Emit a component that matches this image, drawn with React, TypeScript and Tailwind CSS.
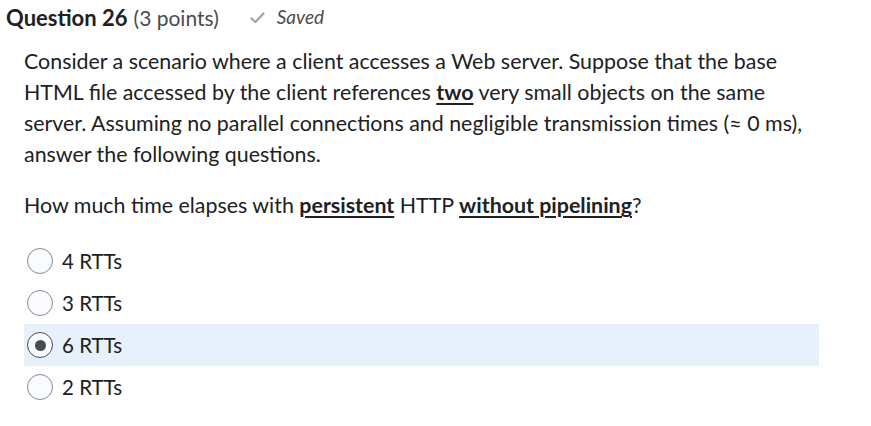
import React from "react";

const options = [
  { label: "4 RTTs", selected: false },
  { label: "3 RTTs", selected: false },
  { label: "6 RTTs", selected: true },
  { label: "2 RTTs", selected: false },
];

function Radio({ selected }: { selected: boolean }) {
  return (
    <span
      className={`flex h-[26px] w-[26px] shrink-0 items-center justify-center rounded-full border bg-[#f9fbff] ${
        selected ? "border-[#494c4e]" : "border-[#868a8e]"
      }`}
    >
      {selected && <span className="h-[11px] w-[11px] rounded-full bg-[#494c4e]" />}
    </span>
  );
}

export default function App() {
  return (
    <div
      className="h-[426px] w-[871px] bg-white text-[#202122]"
      style={{ fontFamily: "Lato, 'Noto Sans', sans-serif" }}
    >
      <div className="flex items-center pl-[6px] pt-[5px] h-[30px]">
        <span className="text-[22px] font-bold">Question 26</span>
        <span className="ml-[6px] text-[21px] text-[#494c4e]">(3 points)</span>
        <span className="ml-[31px] flex items-center gap-[12px] text-[#494c4e]">
          <svg width="15" height="12" viewBox="0 0 15 12">
            <path d="M1.5 6.5 L5.5 10 L13.5 1.5" fill="none" stroke="#9ea2a6" strokeWidth="2.2" strokeLinecap="round" strokeLinejoin="round" />
          </svg>
          <span className="text-[19px] italic">Saved</span>
        </span>
      </div>
      <div className="pl-[24px] pt-[16px] text-[21.4px] leading-[31px]">
        <p className="w-[785px]">
          Consider a scenario where a client accesses a Web server. Suppose that the base HTML file accessed by the client references{" "}
          <span className="font-bold underline decoration-2 underline-offset-[3px]">two</span> very small objects on the same server. Assuming no parallel connections and negligible transmission times (≈ 0 ms), answer the following questions.
        </p>
        <p className="mt-[20px]">
          How much time elapses with{" "}
          <span className="font-bold underline decoration-2 underline-offset-[3px]">persistent</span> HTTP{" "}
          <span className="font-bold underline decoration-2 underline-offset-[3px]">without pipelining</span>?
        </p>
      </div>
      <div className="mt-[19px] ml-[24px] w-[795px] flex flex-col">
        {options.map((o) => (
          <div
            key={o.label}
            className={`flex h-[42px] items-center gap-[9px] pl-[3px] text-[20.5px] ${
              o.selected ? "bg-[#e7f1fb]" : ""
            }`}
          >
            <Radio selected={o.selected} />
            <span>{o.label}</span>
          </div>
        ))}
      </div>
    </div>
  );
}
